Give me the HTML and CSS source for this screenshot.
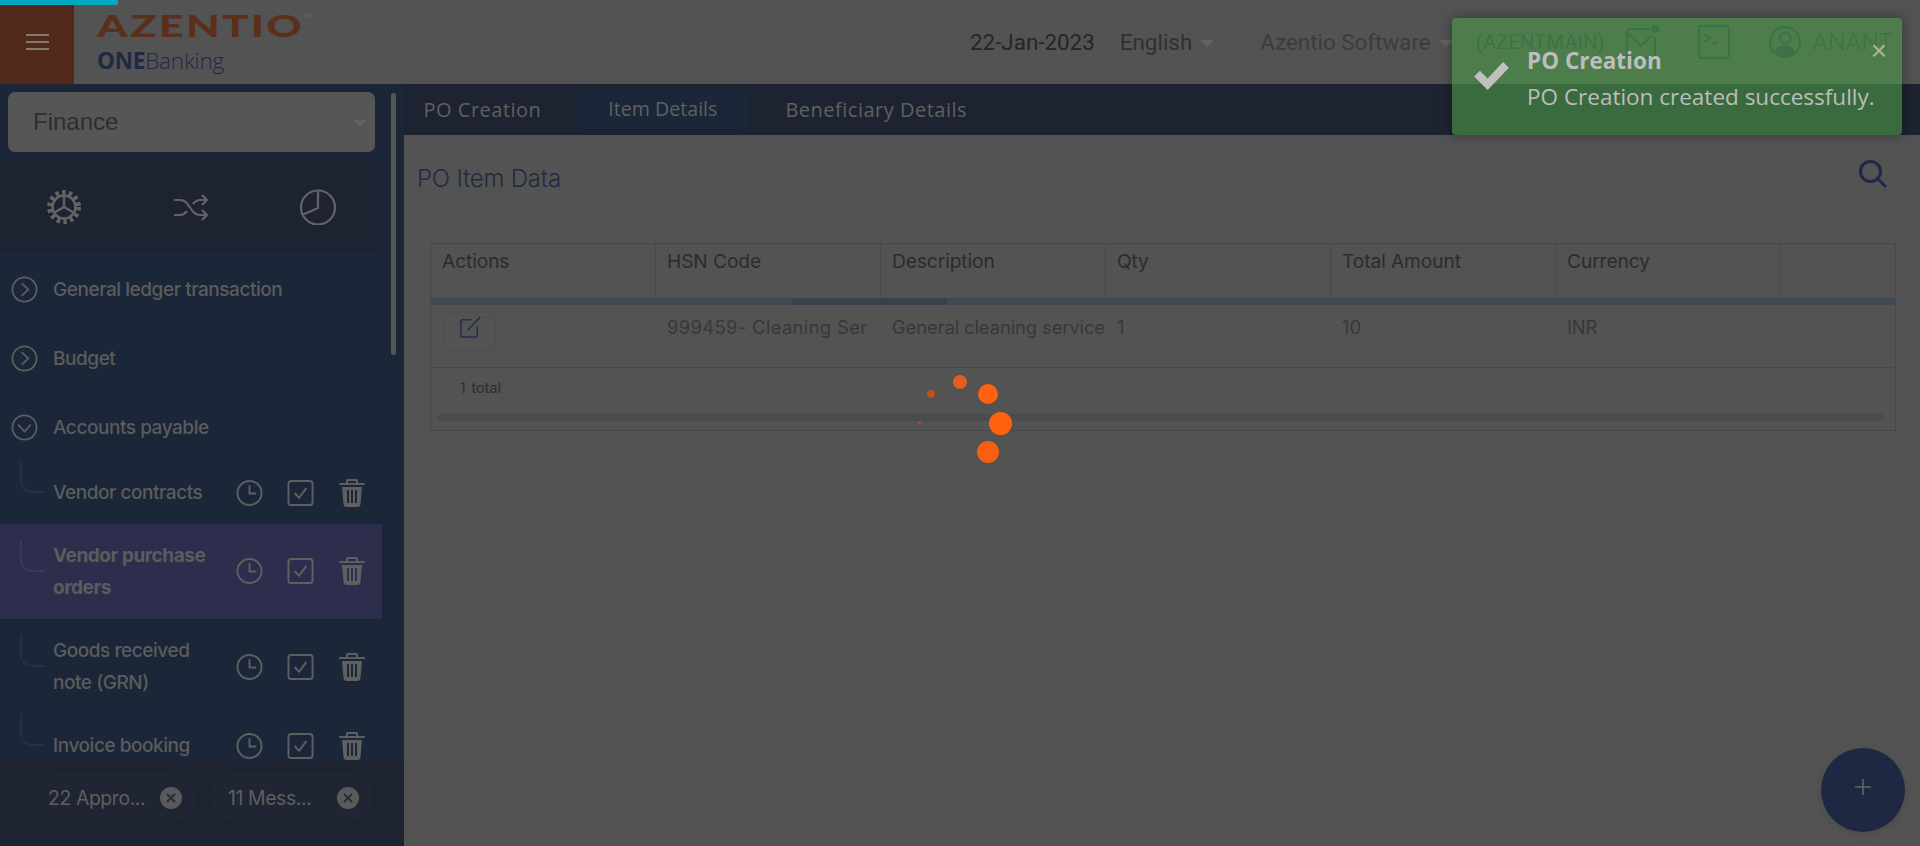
FILE: index.html
```html
<!DOCTYPE html>
<html lang="en">
<head>
<meta charset="utf-8">
<title>PO Creation</title>
<link rel="stylesheet" href="styles.css">
</head>
<body>
<div class="page">
  <div class="progress"></div>
  <header class="topbar">
    <button class="menu-btn" aria-label="Menu"><span></span><span></span><span></span></button>
    <div class="logo">
      <div class="logo-main"><span class="logo-word">AZENTIO</span><sup class="logo-tm">TM</sup></div>
      <div class="logo-sub"><b>ONE</b>Banking</div>
    </div>
    <div class="top-right">
      <span class="date">22-Jan-2023</span>
      <span class="lang">English<i class="caret"></i></span>
      <span class="org">Azentio Software<i class="caret"></i></span>
      <span class="branch">(AZENTMAIN)</span>
      <svg class="ti ti-mail" viewBox="0 0 34 36"><path d="M25 5H4a2 2 0 0 0-2 2v25a2 2 0 0 0 2 2h24a2 2 0 0 0 2-2V13M3 9l13 13 11-11"/><circle cx="30" cy="5" r="4" class="fill"/></svg>
      <svg class="ti ti-term" viewBox="0 0 34 36"><rect x="2" y="2" width="30" height="32" rx="3"/><path d="M7 10l6 4-6 4M15 19h6"/></svg>
      <svg class="ti ti-user" viewBox="0 0 34 36"><circle cx="17" cy="18" r="15"/><circle cx="17" cy="14" r="5.5"/><path class="fill" d="M7 29c2-6 6-8 10-8s8 2 10 8c-3 3-6 4-10 4s-7-1-10-4z"/></svg>
      <span class="user">ANANT</span>
    </div>
  </header>

  <div class="main">
    <aside class="sidebar">
      <div class="side-top">
        <div class="module-col">
          <div class="module-select"><span>Finance</span><i class="caret caret-sel"></i></div>
          <div class="panel">
            <svg class="pi" viewBox="0 0 36 36"><circle cx="18" cy="18" r="14.5" class="gear-teeth"/><circle cx="18" cy="18" r="11.5" class="gear-ring"/><path class="gear-ring" d="M18 18V7M18 18l9.5 5.5M18 18L8.500 23.500"/></svg>
            <svg class="pi" viewBox="0 0 36 36"><path d="M1 11h6c5 0 7 3 10 7.500s5 7.500 10 7.500h7M1 26h6c3 0 5-1.500 7-4M20 15c2-2.500 4-4 7-4h7M29 6l5 5-5 5M29 21l5 5-5 5"/></svg>
            <svg class="pi" viewBox="0 0 36 36"><circle cx="18" cy="18.500" r="17"/><path d="M18 1.500V19L2 26"/></svg>
            <span class="panel-mark"></span>
          </div>
        </div>
        <div class="side-scroll"></div>
      </div>
      <nav class="nav">
        <div class="nav-item"><svg class="ci" viewBox="0 0 28 28"><circle cx="14" cy="14" r="12.500"/><path d="M11 7.500l7 6.500-7 6.500"/></svg><span>General ledger transaction</span></div>
        <div class="nav-item"><svg class="ci" viewBox="0 0 28 28"><circle cx="14" cy="14" r="12.500"/><path d="M11 7.500l7 6.500-7 6.500"/></svg><span>Budget</span></div>
        <div class="nav-item"><svg class="ci" viewBox="0 0 28 28"><circle cx="14" cy="14" r="12.500"/><path d="M7.500 11l6.500 7 6.500-7"/></svg><span>Accounts payable</span></div>

        <div class="sub sub-s"><i class="tree"></i><span class="sub-label">Vendor contracts</span>
          <div class="sub-icons">
            <svg viewBox="0 0 28 28"><circle cx="14" cy="14" r="12.500"/><path d="M14 6v8.500h7"/></svg>
            <svg viewBox="0 0 28 28"><rect x="1.500" y="1.500" width="25" height="25" rx="3"/><path d="M8 14l4.500 5L20 9"/></svg>
            <svg viewBox="0 0 26 28"><path class="fill" d="M9 0h8a2 2 0 0 1 2 2v2h6a1 1 0 0 1 0 2H1a1 1 0 0 1 0-2h6V2a2 2 0 0 1 2-2zm0 2v2h8V2zM3 8h20l-1.500 17a3 3 0 0 1-3 3h-11a3 3 0 0 1-3-3zm5 3v13h2V11zm4 0v13h2V11zm4 0v13h2V11z"/></svg>
          </div>
        </div>
        <div class="sub sub-l active"><i class="tree"></i><span class="sub-label">Vendor purchase orders</span>
          <div class="sub-icons">
            <svg viewBox="0 0 28 28"><circle cx="14" cy="14" r="12.500"/><path d="M14 6v8.500h7"/></svg>
            <svg viewBox="0 0 28 28"><rect x="1.500" y="1.500" width="25" height="25" rx="3"/><path d="M8 14l4.500 5L20 9"/></svg>
            <svg viewBox="0 0 26 28"><path class="fill" d="M9 0h8a2 2 0 0 1 2 2v2h6a1 1 0 0 1 0 2H1a1 1 0 0 1 0-2h6V2a2 2 0 0 1 2-2zm0 2v2h8V2zM3 8h20l-1.500 17a3 3 0 0 1-3 3h-11a3 3 0 0 1-3-3zm5 3v13h2V11zm4 0v13h2V11zm4 0v13h2V11z"/></svg>
          </div>
        </div>
        <div class="sub sub-g"><i class="tree"></i><span class="sub-label">Goods received note (GRN)</span>
          <div class="sub-icons">
            <svg viewBox="0 0 28 28"><circle cx="14" cy="14" r="12.500"/><path d="M14 6v8.500h7"/></svg>
            <svg viewBox="0 0 28 28"><rect x="1.500" y="1.500" width="25" height="25" rx="3"/><path d="M8 14l4.500 5L20 9"/></svg>
            <svg viewBox="0 0 26 28"><path class="fill" d="M9 0h8a2 2 0 0 1 2 2v2h6a1 1 0 0 1 0 2H1a1 1 0 0 1 0-2h6V2a2 2 0 0 1 2-2zm0 2v2h8V2zM3 8h20l-1.500 17a3 3 0 0 1-3 3h-11a3 3 0 0 1-3-3zm5 3v13h2V11zm4 0v13h2V11zm4 0v13h2V11z"/></svg>
          </div>
        </div>
        <div class="sub sub-s"><i class="tree"></i><span class="sub-label">Invoice booking</span>
          <div class="sub-icons">
            <svg viewBox="0 0 28 28"><circle cx="14" cy="14" r="12.500"/><path d="M14 6v8.500h7"/></svg>
            <svg viewBox="0 0 28 28"><rect x="1.500" y="1.500" width="25" height="25" rx="3"/><path d="M8 14l4.500 5L20 9"/></svg>
            <svg viewBox="0 0 26 28"><path class="fill" d="M9 0h8a2 2 0 0 1 2 2v2h6a1 1 0 0 1 0 2H1a1 1 0 0 1 0-2h6V2a2 2 0 0 1 2-2zm0 2v2h8V2zM3 8h20l-1.500 17a3 3 0 0 1-3 3h-11a3 3 0 0 1-3-3zm5 3v13h2V11zm4 0v13h2V11zm4 0v13h2V11z"/></svg>
          </div>
        </div>
      </nav>
      <div class="chips">
        <div class="chip"><span>22 Appro...</span><svg viewBox="0 0 22 22"><circle cx="11" cy="11" r="11" class="fill"/><path d="M7 7l8 8M15 7l-8 8"/></svg></div>
        <div class="chip chip-b"><span>11 Mess...</span><svg viewBox="0 0 22 22"><circle cx="11" cy="11" r="11" class="fill"/><path d="M7 7l8 8M15 7l-8 8"/></svg></div>
      </div>
    </aside>

    <section class="content">
      <div class="tabs">
        <span class="tab tab-po">PO Creation</span>
        <span class="tab tab-item">Item Details</span>
        <span class="tab tab-ben">Beneficiary Details</span>
      </div>
      <div class="title-row">
        <h1>PO Item Data</h1>
        <svg class="search" viewBox="0 0 30 30"><circle cx="12.500" cy="12.500" r="10"/><path d="M20 20l8 8"/></svg>
      </div>
      <div class="table">
        <div class="t-row t-head">
          <div class="cell">Actions</div><div class="cell">HSN Code</div><div class="cell">Description</div><div class="cell">Qty</div><div class="cell">Total Amount</div><div class="cell">Currency</div><div class="cell cell-last"></div>
        </div>
        <div class="t-strip"><i></i></div>
        <div class="t-row t-body">
          <div class="cell"><span class="edit"><svg viewBox="0 0 24 24"><path d="M13 4H3.500A1.500 1.500 0 0 0 2 5.500v15A1.500 1.500 0 0 0 3.500 22h14a1.500 1.500 0 0 0 1.500-1.500V11M9 15L22 1"/></svg></span></div>
          <div class="cell cell-hsn">999459- Cleaning Ser</div><div class="cell">General cleaning service</div><div class="cell">1</div><div class="cell">10</div><div class="cell">INR</div><div class="cell"></div>
        </div>
        <div class="t-foot">
          <div class="total">1 total</div>
          <div class="h-scroll"></div>
        </div>
      </div>
    </section>
  </div>

  <div class="spinner">
    <i class="d1"></i><i class="d2"></i><i class="d3"></i><i class="d4"></i><i class="d5"></i><i class="d6"></i><i class="d7"></i>
  </div>

  <button class="fab" aria-label="Add"><svg viewBox="0 0 18 18"><path d="M9 1v16M1 9h16"/></svg></button>

  <div class="toast">
    <svg class="toast-check" viewBox="0 0 38 30"><path d="M1 16l6-6 8 8L31 1l6 6-22 23z"/></svg>
    <div class="toast-text">
      <div class="toast-title">PO Creation</div>
      <div class="toast-msg">PO Creation created successfully.</div>
    </div>
    <span class="toast-close">×</span>
  </div>
</div>
</body>
</html>
```
FILE: styles.css
```css
* { box-sizing: border-box; }
html, body { margin: 0; height: 100%; }
body { background: #535353; font-family: "Inter", "Liberation Sans", sans-serif; overflow: hidden; }
.page { position: relative; width: 1920px; height: 846px; display: flex; flex-direction: column; overflow: hidden; background: #535353; }
svg { display: block; fill: none; stroke: currentColor; }
svg .fill { fill: currentColor; stroke: none; }
button { border: 0; padding: 0; }
i { display: block; }

.progress { position: absolute; left: 0; top: 0; width: 118px; height: 5px; background: #00a8c0; }

/* top bar */
.topbar { height: 84px; flex: none; display: flex; align-items: stretch; }
.menu-btn { width: 74px; background: #50291a; display: flex; flex-direction: column; justify-content: center; gap: 4.5px; align-items: center; }
.menu-btn span { display: block; width: 23px; height: 2.5px; background: #84796f; }
.logo { width: 250px; padding: 10px 0 0 23px; color: #5a301c; }
.logo-main { height: 36px; display: flex; align-items: flex-start; }
.logo-word { display: inline-block; font: 900 30px/30px "Lato", sans-serif; letter-spacing: 1.5px; transform: scaleX(1.46); transform-origin: left top; width: 206px; }
.logo-tm { font: 400 6px/8px "Liberation Sans", sans-serif; color: #6a6a6a; margin: 2px 0 0 0; }
.logo-sub { font: 300 22.5px/26px "Open Sans", sans-serif; color: #1f2943; margin-top: 2px; letter-spacing: -.2px; }
.logo-sub b { font-weight: 700; }

.top-right { flex: 1; display: flex; align-items: center; padding-right: 22px; font: 400 22.4px/26px "Roboto", sans-serif; color: #333; white-space: nowrap; }
.date { margin-left: 646px; color: #262626; }
.lang { margin-left: 25px; display: flex; align-items: center; color: #303030; }
.org { margin-left: 46px; display: flex; align-items: center; color: #3c3c3c; }
.caret { width: 0; height: 0; border-style: solid; border-width: 7px 7px 0; border-color: #636363 transparent transparent; margin-left: 8px; margin-top: 2px; }
.branch { margin-left: 23px; font-size: 20.4px; color: #263445; }
.ti { width: 34px; height: 36px; color: #263445; stroke-width: 2; flex: none; }
.ti-mail { margin-left: 20px; }
.ti-term { margin-left: 38px; }
.ti-user { margin-left: 37px; }
.user { margin-left: 11px; font-size: 24px; font-weight: 300; color: #263445; letter-spacing: .5px; }

.main { flex: 1; display: flex; min-height: 0; }

/* sidebar */
.sidebar { width: 404px; flex: none; background: #1b2639; display: flex; flex-direction: column; }
.side-top { display: flex; height: 168px; flex: none; }
.module-col { width: 382px; flex: none; }
.module-select { margin: 8px 7px 8px 8px; height: 60px; border-radius: 7px; background: #565656; color: #2e2e2e; display: flex; align-items: center; justify-content: space-between; padding: 0 8px 0 25px; font: 400 24px/28px "Liberation Sans", sans-serif; }
.caret-sel { margin: 2px 0 0; }
.panel { position: relative; height: 92px; background: #1d2330; display: flex; align-items: center; }
.pi { width: 36px; height: 36px; color: #636363; stroke-width: 2.2; position: absolute; top: 29px; }
.pi:nth-child(1) { left: 46px; }
.pi:nth-child(2) { left: 173px; }
.pi:nth-child(3) { left: 300px; }
.gear-teeth { stroke-width: 5; stroke-dasharray: 3.5 3.1; }
.gear-ring { stroke-width: 2.500; }
.panel-mark { position: absolute; left: 135px; top: 83px; width: 113px; height: 3px; background: #1b2639; }
.side-scroll { width: 5px; height: 262px; margin: 9px 0 0 9px; background: #565656; border-radius: 3px; position: relative; z-index: 2; }

.nav { flex: 1; min-height: 0; overflow: hidden; padding-top: 3px; color: #5c5c5c; font-size: 19px; font-weight: 500; letter-spacing: -.45px; }
.nav-item { height: 69px; display: flex; align-items: center; padding-left: 11px; gap: 15px; }
.ci { width: 27px; height: 27px; stroke-width: 1.800; color: #5f5f5f; flex: none; }
.sub { width: 382px; display: flex; align-items: center; padding-left: 20px; position: relative; }
.sub-s { height: 62px; }
.sub-l { height: 95px; }
.sub-g { height: 96px; }
.active { background: #2d2e4d; font-weight: 700; }
.tree { width: 25px; height: 32px; flex: none; margin-right: 8px; transform: translateY(-16px); border-left: 2px solid #253044; border-bottom: 2px solid #253044; border-bottom-left-radius: 12px; }
.active .tree { border-color: #383958; }
.sub-label { width: 170px; margin-right: 13px; line-height: 32px; flex: none; }
.sub-icons { display: flex; align-items: center; color: #5f5f5f; margin-top: -1px; }
.sub-icons svg { width: 27px; height: 28px; margin-right: 24px; stroke-width: 2; flex: none; }
.sub-icons svg:nth-child(2) { margin-right: 25px; }
.sub-icons svg:last-child { width: 26px; margin-right: 0; }

.chips { height: 84px; flex: none; background: #1d2330; display: flex; gap: 12px; padding: 11px 0 0 30px; position: relative; z-index: 1; }
.chip { width: 167px; height: 49px; background: #1f2533; border-radius: 25px; display: flex; align-items: center; justify-content: space-between; padding: 1px 15px 0 18px; color: #5f5f5f; font-size: 19.4px; letter-spacing: -.4px; }
.chip-b { width: 165px; padding-left: 19px; }
.chip svg { width: 22px; height: 22px; margin-top: -1px; stroke: #262b38; stroke-width: 1.800; color: #5a5a5a; }

/* content */
.content { flex: 1; min-width: 0; }
.tabs { height: 51px; background: #1d2330; display: flex; align-items: center; font: 400 20px/24px "Open Sans", sans-serif; color: #606060; letter-spacing: .5px; }
.tab-po { margin-left: 19.500px; }
.tab-item { margin-left: 35px; width: 173px; height: 39px; display: flex; align-items: center; justify-content: center; background: #1b2639; border-radius: 7px; font-size: 19.6px; font-weight: 500; letter-spacing: 0; margin-top: -1px; }
.tab-ben { margin-left: 36px; }
.title-row { height: 108px; display: flex; justify-content: space-between; padding: 29px 32px 0 13px; }
.title-row h1 { margin: 0; font: 300 24px/30px "Inter", sans-serif; color: #212b40; letter-spacing: -.2px; }
.search { width: 30px; height: 30px; margin-top: -5px; color: #1f2945; stroke-width: 3; }

.table { margin: 0 24px 0 26px; border: 1px solid #484848; height: 188px; }
.t-row { display: grid; grid-template-columns: repeat(6, 225px) 1fr; }
.t-head { height: 54px; color: #2c2c2c; font-size: 19.2px; letter-spacing: -.1px; }
.t-head .cell { padding: 6px 11px 0; line-height: 22px; border-right: 1px solid #494949; }
.t-head .cell-last { border-right: 0; }
.t-strip { height: 7px; background: #3f4a55; position: relative; }
.t-strip i { position: absolute; left: 361px; width: 155px; height: 7px; background: #37424e; }
.t-body { height: 63px; border-bottom: 1px solid #494949; color: #383838; font-size: 18.4px; letter-spacing: -.1px; }
.t-body .cell { padding: 11px 11px 0; line-height: 22px; white-space: nowrap; }
.t-body .cell-hsn { letter-spacing: .35px; }
.edit { display: flex; align-items: flex-start; justify-content: center; width: 52px; height: 40px; margin: -4px 0 0 2px; padding-top: 3px; border: 1px solid #4e4e4e; border-radius: 2px; }
.edit svg { width: 23px; height: 23px; color: #232e4d; stroke-width: 1.600; }
.t-foot { padding: 9px 11px 0 7px; }
.total { padding-left: 21px; font: 400 15px/22px "Roboto", sans-serif; color: #2e2e2e; height: 37px; }
.h-scroll { height: 7px; background: #494b4c; border-radius: 4px; }

/* spinner */
.spinner i { position: absolute; border-radius: 50%; }
.d1 { left: 927px; top: 390px; width: 8px; height: 8px; background: #b8531f; }
.d2 { left: 953px; top: 375px; width: 14px; height: 14px; background: #e35f20; }
.d3 { left: 978px; top: 384px; width: 20px; height: 20px; background: #ff620f; }
.d4 { left: 989px; top: 412px; width: 23px; height: 23px; background: #ff620f; }
.d5 { left: 977px; top: 441px; width: 22px; height: 22px; background: #f95f10; }
.d6 { left: 918px; top: 421px; width: 3px; height: 3px; background: #a9522a; }
.d7 { left: 959px; top: 462px; width: 2px; height: 2px; background: #7a5240; }

/* fab */
.fab { position: absolute; left: 1821px; top: 748px; width: 84px; height: 84px; border-radius: 50%; background: #1e2842; box-shadow: 0 2px 8px rgba(0,0,0,.1); display: flex; align-items: center; justify-content: center; color: #666; padding-bottom: 7px; }
.fab svg { width: 18px; height: 18px; stroke-width: 1.500; }

/* toast */
.toast { position: absolute; left: 1452px; top: 18px; width: 450px; height: 117px; border-radius: 4px; background: rgba(76,152,72,.62); box-shadow: 0 0 14px rgba(0,0,0,.35); display: flex; color: #bdbdbd; }
.toast-check { width: 37px; height: 29px; margin: 43px 0 0 21px; fill: #c0c0c0; stroke: none; flex: none; }
.toast-text { margin-left: 17px; font: 400 22.5px/30px "Open Sans", sans-serif; padding-top: 28px; }
.toast-title { font-weight: 700; }
.toast-msg { margin-top: 6px; white-space: nowrap; }
.toast-close { position: absolute; right: 15px; top: 19px; font: 400 28px/28px "Liberation Sans", sans-serif; color: #a9b5a9; }
```
